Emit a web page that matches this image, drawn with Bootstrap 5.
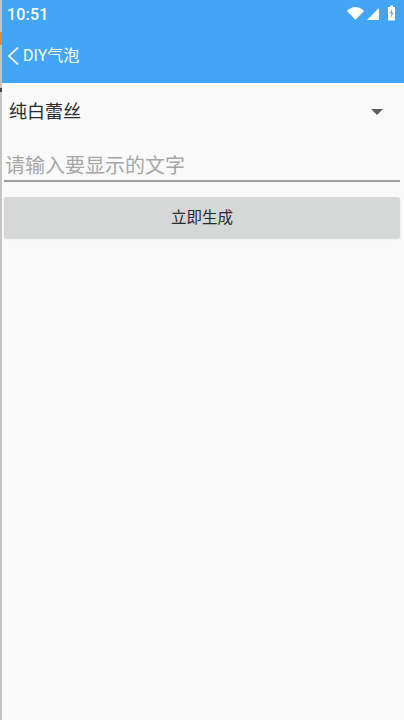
<!DOCTYPE html>
<html lang="zh">
<head>
<meta charset="utf-8">
<link href="https://cdn.jsdelivr.net/npm/bootstrap@5.3.0/dist/css/bootstrap.min.css" rel="stylesheet">
<style>
html,body{height:100%;overflow:hidden}
body{background:#fafafa;font-family:"Roboto","Noto Sans CJK SC",sans-serif;color:#2a2a2a}
.app-screen{height:720px;border-left:2px solid #c4c4c4;display:flex;flex-direction:column;background:#fafafa;position:relative}
.edge-mark{position:absolute;left:-2px;width:2px}
.edge-orange{top:32px;height:13px;background:#e08a3c}
.edge-dark{top:88px;height:4px;background:#444}
.app-head{background:#42a5f5;color:#fff;height:83px;flex:none}
.stat-bar{height:29px;padding:0 8px 0 5px;font-size:16px;font-weight:500;letter-spacing:.2px}
.stat-icons{margin-bottom:3px}
.tool-bar{height:54px;padding:0 0 0 5px;font-size:16px;gap:4px}
.pick-row{height:57px;padding:0 19px 0 7px;font-size:18px}
.pick-arrow{width:0;height:0;border-left:6px solid transparent;border-right:6px solid transparent;border-top:6px solid #616161;margin-right:2px}
.text-field{margin:0 4px 0 2px;height:42px;border-bottom:2px solid #9e9e9e;font-size:20px;color:#a6a6a6;line-height:1;padding:0 0 4px 1px}
.make-btn{margin:15px 4px 0 2px;height:41px;background:#d6d7d7;border-radius:2px;border:0;box-shadow:0 1px 2px rgba(0,0,0,.16);color:#2a2a2a;font-size:15.500px;padding:2px 0 0}
</style>
</head>
<body>
<div class="app-screen">
  <span class="edge-mark edge-orange"></span>
  <span class="edge-mark edge-dark"></span>
  <header class="app-head">
    <div class="stat-bar d-flex align-items-center justify-content-between">
      <span>10:51</span>
      <svg class="stat-icons" width="49" height="16" viewBox="0 0 49 16" aria-hidden="true">
        <path d="M0 6C5 .8 12 .8 17 6L8.500 15Z" fill="#fff"/>
        <path d="M20 15 32 3V15Z" fill="#fff"/>
        <path d="M41 2h2V.5h3V2h2V15.500H41Z" fill="#fff"/>
        <path d="M45.200 3.500 43 8.500h1.500L43.800 13l2.700-5.500H45Z" fill="#42a5f5"/>
      </svg>
    </div>
    <div class="tool-bar d-flex align-items-center">
      <svg width="12" height="18" viewBox="0 0 12 18" aria-hidden="true"><path d="M11 .6 2 9l9 8.400" fill="none" stroke="#fff" stroke-width="1.700"/></svg>
      <span>DIY气泡</span>
    </div>
  </header>
  <div class="pick-row d-flex align-items-center justify-content-between">
    <span>纯白蕾丝</span>
    <span class="pick-arrow"></span>
  </div>
  <div class="text-field d-flex align-items-end">请输入要显示的文字</div>
  <button class="btn make-btn" type="button">立即生成</button>
</div>
<script src="https://cdn.jsdelivr.net/npm/bootstrap@5.3.0/dist/js/bootstrap.bundle.min.js"></script>
</body>
</html>
